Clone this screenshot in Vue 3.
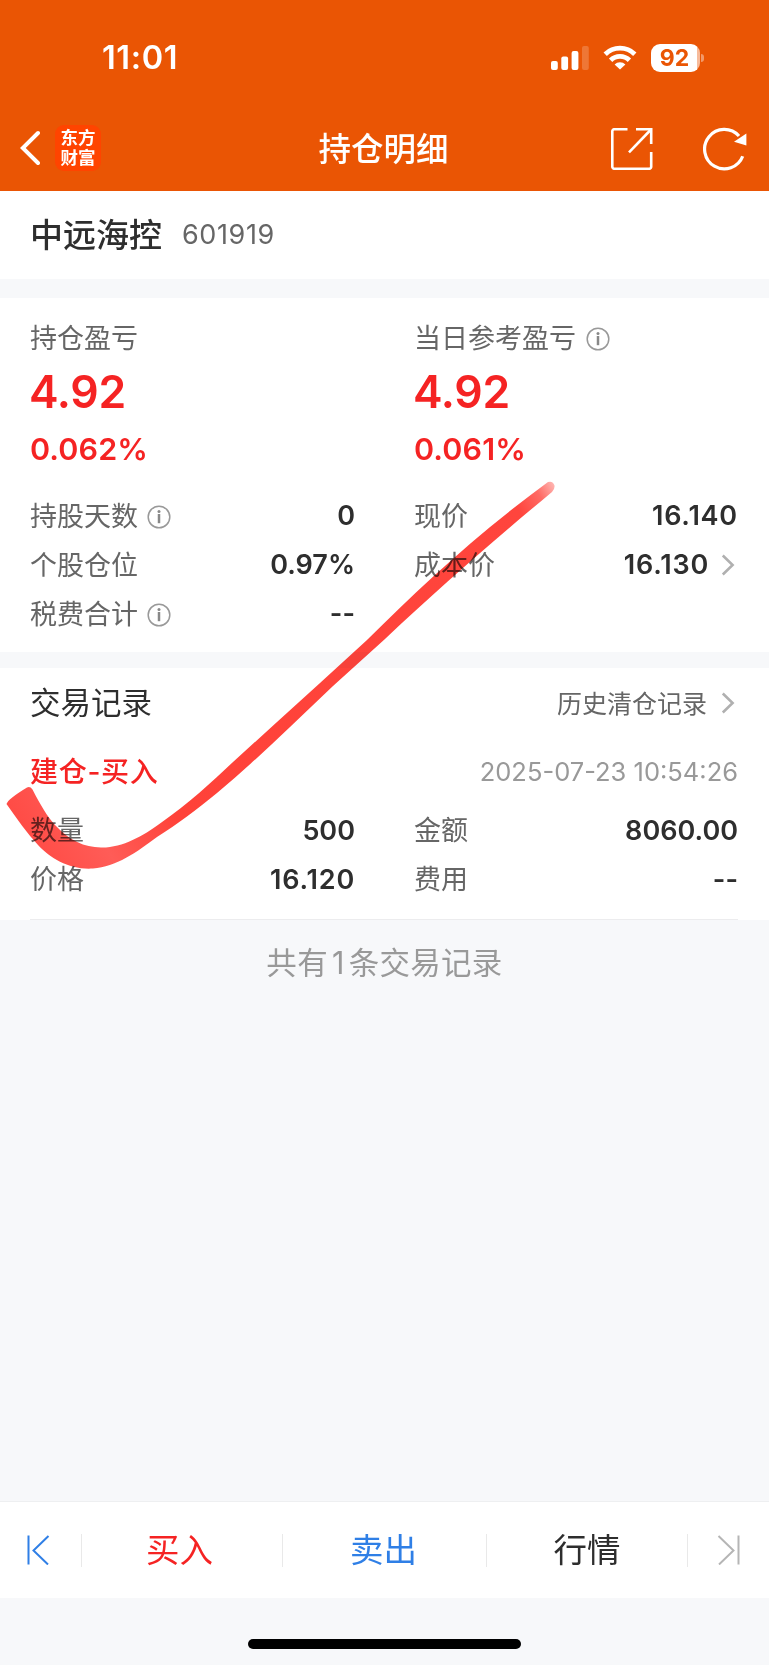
<script setup>
import { ref } from 'vue';

const stock = ref({ name: '中远海控', code: '601919' });

//盈亏汇总
const summary = ref([
  { label: '持仓盈亏', value: '4.92', percent: '0.062%', tip: false },
  { label: '当日参考盈亏', value: '4.92', percent: '0.061%', tip: true },
]);

//持仓明细，左右两列
const details = ref([
  { label: '持股天数', value: '0', tip: true },
  { label: '现价', value: '16.140', price: true },
  { label: '个股仓位', value: '0.97%' },
  { label: '成本价', value: '16.130', price: true, link: true },
  { label: '税费合计', value: '--', tip: true },
]);

//交易记录
const records = ref([
  {
    type: '建仓-买入',
    time: '2025-07-23 10:54:26',
    items: [
      { label: '数量', value: '500' },
      { label: '金额', value: '8060.00' },
      { label: '价格', value: '16.120', price: true },
      { label: '费用', value: '--' },
    ],
  },
]);
</script>

<template>
  <div class="page">
    <header class="top">
      <div class="status-bar">
        <span class="time">11:01</span>
        <div class="status-icons">
          <svg class="signal" width="38" height="24" viewBox="0 0 38 24" fill="#fff">
            <rect x="0" y="15" width="6.8" height="9" rx="2" />
            <rect x="10.3" y="10.5" width="6.8" height="13.5" rx="2" />
            <rect x="20.6" y="5" width="6.8" height="19" rx="2" />
            <rect x="31" y="0" width="6.8" height="24" rx="2" opacity="0.2" />
          </svg>
          <svg class="wifi" width="34" height="25" viewBox="0 0 34 25" fill="none" stroke="#fff" stroke-width="4.8">
            <path d="M2.2 9.2A21.3 21.3 0 0 1 31.8 9.2" />
            <path d="M7.6 15.2A13.4 13.4 0 0 1 26.4 15.2" />
            <path d="M17 24.6L11.6 19.5A7.6 7.6 0 0 1 22.4 19.5Z" fill="#fff" stroke="none" />
          </svg>
          <div class="battery"><span>92</span></div>
          <i class="battery-cap"></i>
        </div>
      </div>
      <nav class="nav">
        <div class="nav-left">
          <svg width="20" height="36" viewBox="0 0 20 36" fill="none" stroke="#fff" stroke-width="4">
            <path d="M18 3L2.8 18L18 33" stroke-linecap="round" />
          </svg>
          <div class="logo"><span>东方</span><span>财富</span></div>
        </div>
        <h1>持仓明细</h1>
        <div class="nav-right">
          <svg width="42" height="42" viewBox="0 0 42 42" fill="none" stroke="#fff" stroke-width="2.6">
            <path d="M16.5 1.3H3.5A2 2 0 0 0 1.3 3.5V38.5A2 2 0 0 0 3.5 40.7H38A2 2 0 0 0 40.2 38.5V24" />
            <path d="M25 1.3H40.2V16" />
            <path d="M40 1.5L18 24.3" />
          </svg>
          <svg width="44" height="44" viewBox="0 0 44 44" fill="none" stroke="#fff" stroke-width="3.2">
            <path d="M39.7 29.2A19.7 19.7 0 1 1 36 9" />
            <path d="M43.4 6.5V18.5L31 14.8Z" fill="#fff" stroke="none" />
          </svg>
        </div>
      </nav>
    </header>

    <section class="stock">
      <h2>{{ stock.name }}</h2>
      <span>{{ stock.code }}</span>
    </section>

    <section class="holding">
      <div class="columns">
        <div class="summary" v-for="item in summary" :key="item.label">
          <div class="label">
            {{ item.label }}
            <svg v-if="item.tip" class="tip" viewBox="0 0 24 24">
              <circle cx="12" cy="12" r="10.8" fill="none" stroke="#999" stroke-width="1.5" />
              <path d="M12 9V18.2" stroke="#888" stroke-width="2.5" />
              <circle cx="12" cy="6.4" r="1.5" fill="#888" />
            </svg>
          </div>
          <div class="profit">{{ item.value }}</div>
          <div class="percent">{{ item.percent }}</div>
        </div>
      </div>
      <div class="columns details">
        <div class="row" v-for="item in details" :key="item.label">
          <div class="label">
            {{ item.label }}
            <svg v-if="item.tip" class="tip" viewBox="0 0 24 24">
              <circle cx="12" cy="12" r="10.8" fill="none" stroke="#999" stroke-width="1.5" />
              <path d="M12 9V18.2" stroke="#888" stroke-width="2.5" />
              <circle cx="12" cy="6.4" r="1.5" fill="#888" />
            </svg>
          </div>
          <div class="value" :class="{ price: item.price }">
            {{ item.value }}
            <svg v-if="item.link" class="arrow" viewBox="0 0 14 22">
              <path d="M1.8 1.5L11.6 11L1.8 20.5" />
            </svg>
          </div>
        </div>
      </div>
    </section>

    <section class="trades">
      <div class="trades-header">
        <h3>交易记录</h3>
        <div class="history">
          <span>历史清仓记录</span>
          <svg class="arrow" viewBox="0 0 14 22">
            <path d="M1.8 1.5L11.6 11L1.8 20.5" />
          </svg>
        </div>
      </div>
      <div class="record" v-for="record in records" :key="record.time">
        <div class="record-header">
          <span class="type">{{ record.type }}</span>
          <span class="date">{{ record.time }}</span>
        </div>
        <div class="columns">
          <div class="row" v-for="item in record.items" :key="item.label">
            <div class="label">{{ item.label }}</div>
            <div class="value" :class="{ price: item.price }">{{ item.value }}</div>
          </div>
        </div>
      </div>
    </section>

    <p class="total">共有<span>{{ records.length }}</span>条交易记录</p>

    <footer class="toolbar">
      <button class="side">
        <svg width="24" height="30" viewBox="0 0 24 30" fill="none" stroke="#2f7fe6" stroke-width="2">
          <path d="M2.5 0.5V29.5M22.5 1L7.5 15.5L22 29.5" />
        </svg>
      </button>
      <button class="buy">买入</button>
      <button class="sell">卖出</button>
      <button class="quote">行情</button>
      <button class="side">
        <svg width="24" height="30" viewBox="0 0 24 30" fill="none" stroke="#b5b5b5" stroke-width="2">
          <path d="M21.5 0.5V29.5M1.5 1L16.5 15.5L2 29.5" />
        </svg>
      </button>
    </footer>
    <div class="home"><i></i></div>

    <!-- 手绘对勾 -->
    <svg class="check" width="769" height="1665" viewBox="0 0 769 1665">
      <defs>
        <linearGradient id="ink" gradientUnits="userSpaceOnUse" x1="6" y1="800" x2="555" y2="484">
          <stop offset="0" stop-color="#ff4c46" />
          <stop offset="0.1" stop-color="#ff5c57" />
          <stop offset="0.22" stop-color="#ff4239" />
          <stop offset="0.93" stop-color="#ff453d" />
          <stop offset="0.97" stop-color="#ff6a64" />
          <stop offset="1" stop-color="#ffb9b5" />
        </linearGradient>
      </defs>
      <path
        fill="url(#ink)"
        d="M6.5 804Q8 799 27 787.5Q30 786 32.5 789.5C41 806 47 816 55 825C70 841 84 847 101 847.5C122 848 143 836 160 823.5C188 804 212 782 233 762L277 722L320 683L367 640C418 589 478 533 548 482Q553 480.5 554.5 485.5Q555 489 552 492C500 535 440 587 385 639L333 686L290 727C266 750 242 772 217 793C196 810 178 824 157 837C137 852 116 867 93 868.5C70 870 51 859 38 845C27 833 17 819 6.5 804Z"
      />
    </svg>
  </div>
</template>

<style>
body {
  background-color: #f7f8fa;
}
</style>

<style scoped>
.page {
  position: relative;
  display: flex;
  flex-direction: column;
  height: 1665px;
  overflow: hidden;
  background-color: #f7f8fa;
  color: #2e2e2e;
  font-family: Inter, "Noto Sans CJK SC", sans-serif;
}
h1,
h2,
h3,
p {
  margin: 0;
}
.top {
  height: 191px;
  background-color: #ea5504;
  color: #fff;
}
.status-bar {
  display: flex;
  align-items: center;
  justify-content: space-between;
  box-sizing: border-box;
  height: 105px;
  padding: 10px 65px 0 102px;
}
.time {
  font-size: 32.5px;
  font-weight: 600;
  letter-spacing: 0.6px;
}
.status-icons {
  display: flex;
  align-items: center;
}
.wifi {
  margin: 0 14px 0 14px;
}
.battery {
  box-sizing: border-box;
  width: 49px;
  height: 28px;
  padding-right: 2px;
  border-radius: 9px;
  background: linear-gradient(to right, #fff 45.5px, #f7bb9b 45.5px);
  color: #ea5504;
  font-size: 23px;
  font-weight: 700;
  line-height: 28px;
  text-align: center;
}
.battery-cap {
  width: 3px;
  height: 8px;
  margin-left: 1px;
  border-radius: 0 4px 4px 0;
  background-color: #f2996a;
}
.nav {
  display: grid;
  grid-template-columns: 1fr auto 1fr;
  align-items: center;
  height: 86px;
  padding: 0 22px 0 20px;
}
.nav-left,
.nav-right {
  display: flex;
  align-items: center;
}
.nav-left {
  gap: 15px;
}
.nav-right {
  justify-content: flex-end;
  gap: 50px;
  padding-top: 1px;
}
.logo {
  display: flex;
  flex-direction: column;
  align-items: center;
  justify-content: center;
  box-sizing: border-box;
  width: 46px;
  height: 46px;
  padding-bottom: 1px;
  border-radius: 9px;
  background-color: #ff4400;
  font-size: 17.5px;
  font-weight: 700;
  line-height: 19.5px;
}
.nav h1 {
  padding-bottom: 4px;
  font-size: 32.5px;
  font-weight: 500;
}
.stock {
  display: flex;
  align-items: center;
  gap: 20px;
  box-sizing: border-box;
  height: 88px;
  padding: 0 30px 2px;
  background-color: #fff;
}
.stock h2 {
  padding-bottom: 3px;
  font-size: 33px;
  font-weight: 500;
}
.stock span {
  color: #666;
  font-size: 27px;
  letter-spacing: 0.6px;
}
.holding {
  box-sizing: border-box;
  height: 354px;
  margin-top: 19px;
  padding: 21px 31px 0 30px;
  background-color: #fff;
}
.columns {
  display: grid;
  grid-template-columns: 325px 324px;
  column-gap: 59px;
}
.label {
  display: flex;
  align-items: center;
  gap: 9px;
  color: #666;
  font-size: 27px;
  line-height: 40px;
}
.tip {
  width: 24px;
  height: 24px;
}
.summary .tip {
  margin-left: 1px;
}
.profit {
  margin: 3px 0 0 -1px;
  color: #f52323;
  font-size: 44.5px;
  font-weight: 600;
  line-height: 60px;
  letter-spacing: -0.3px;
}
.percent {
  margin-top: 7px;
  color: #f52323;
  font-size: 30.5px;
  font-weight: 600;
  line-height: 40px;
  letter-spacing: 0.1px;
}
.details {
  margin-top: 22px;
}
.details .label {
  padding-top: 2px;
}
.row {
  display: flex;
  align-items: center;
  justify-content: space-between;
  height: 49px;
}
.value {
  display: flex;
  align-items: center;
  gap: 12px;
  font-size: 27px;
  font-weight: 600;
}
.price {
  letter-spacing: 0.8px;
}
.arrow {
  width: 14px;
  height: 22px;
  margin-right: 3px;
  fill: none;
  stroke: #b0b0b0;
  stroke-width: 2.6px;
}
.trades {
  box-sizing: border-box;
  height: 252px;
  margin-top: 16px;
  padding: 10px 31px 0 30px;
  background-color: #fff;
}
.trades-header,
.record-header {
  display: flex;
  align-items: center;
  justify-content: space-between;
}
.trades-header {
  height: 50px;
}
.trades-header h3 {
  padding-bottom: 4px;
  font-size: 30.5px;
  font-weight: 400;
}
.history {
  display: flex;
  align-items: center;
  gap: 14px;
  color: #666;
  font-size: 25px;
}
.history span {
  padding-bottom: 2px;
}
.record {
  box-sizing: border-box;
  height: 192px;
  padding-top: 18px;
  border-bottom: 1px solid #ececee;
}
.record-header {
  height: 50px;
  margin-bottom: 10px;
}
.type {
  padding-bottom: 2px;
  color: #f52323;
  font-size: 28px;
  font-weight: 500;
  letter-spacing: 0.7px;
}
.date {
  color: #999;
  font-size: 25.5px;
}
.total {
  height: 581px;
  padding-top: 22px;
  box-sizing: border-box;
  color: #999;
  font-size: 30.5px;
  line-height: 42px;
  text-align: center;
  letter-spacing: 0.3px;
}
.total span {
  margin: 0 4px;
}
.toolbar {
  display: grid;
  grid-template-columns: 82px 201px 204px 201px 81px;
  align-items: center;
  box-sizing: border-box;
  height: 97px;
  border-top: 1px solid #eeeff1;
  background-color: #fff;
}
.toolbar button {
  display: flex;
  align-items: center;
  justify-content: center;
  box-sizing: border-box;
  height: 33px;
  padding: 0 0 6px;
  border: none;
  border-right: 1px solid #e9e9e9;
  background-color: transparent;
  font-family: inherit;
  font-size: 33.5px;
}
.toolbar button:last-child {
  border-right: none;
}
.toolbar .side {
  padding-bottom: 0;
}
.toolbar .side:first-child {
  padding-right: 6px;
}
.toolbar .side:last-child {
  padding-left: 1px;
}
.toolbar .buy {
  padding-right: 5px;
  color: #f52323;
}
.toolbar .sell {
  padding-right: 2px;
  color: #2f7fe6;
}
.toolbar .quote {
  color: #2e2e2e;
}
.home {
  display: flex;
  justify-content: center;
  padding-top: 41px;
}
.home i {
  width: 273px;
  height: 10px;
  border-radius: 5px;
  background-color: #000;
}
.check {
  position: absolute;
  top: 0;
  left: 0;
  mix-blend-mode: multiply;
  pointer-events: none;
}
</style>
